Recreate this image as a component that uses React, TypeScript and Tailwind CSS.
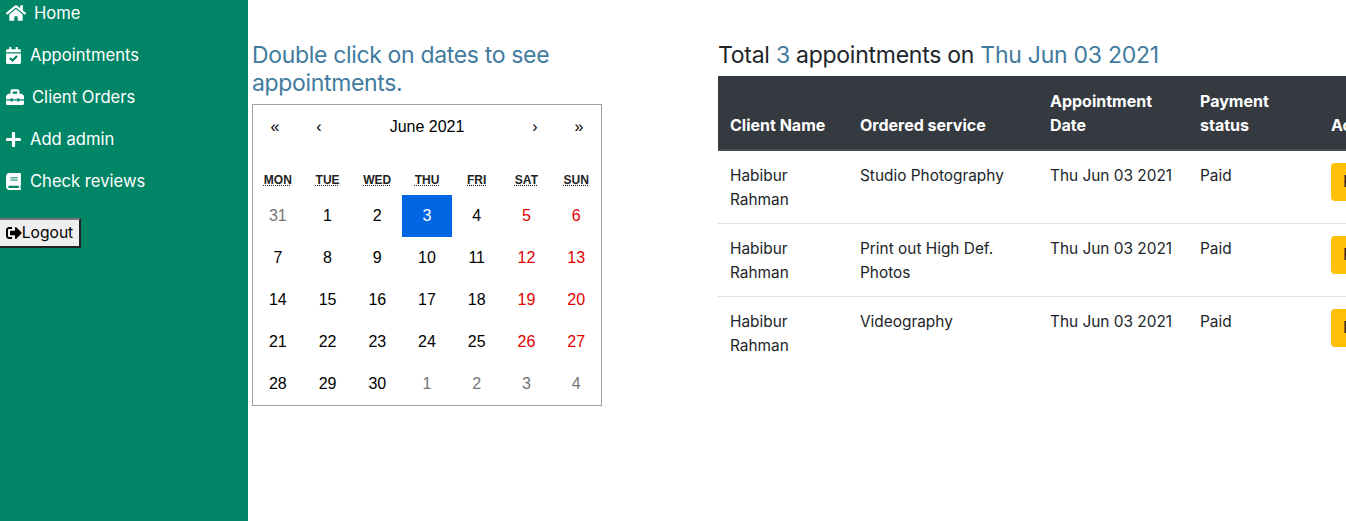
import { FaBook, FaCalendarCheck, FaHome, FaPlus, FaSignOutAlt, FaToolbox } from 'react-icons/fa';

const navItems = [
  { label: 'Home', Icon: FaHome, iconClass: 'h-[18px] w-[20px]', gap: 'gap-[8px]' },
  { label: 'Appointments', Icon: FaCalendarCheck, iconClass: 'h-[17px] w-[15px]', gap: 'gap-[9px]' },
  { label: 'Client Orders', Icon: FaToolbox, iconClass: 'h-[18px] w-[18px]', gap: 'gap-[8px]' },
  { label: 'Add admin', Icon: FaPlus, iconClass: 'h-[17px] w-[15px]', gap: 'gap-[9px]' },
  { label: 'Check reviews', Icon: FaBook, iconClass: 'h-[17px] w-[15px]', gap: 'gap-[9px]' },
];

const weekdays = ['MON', 'TUE', 'WED', 'THU', 'FRI', 'SAT', 'SUN'];

const days = [
  31, 1, 2, 3, 4, 5, 6,
  7, 8, 9, 10, 11, 12, 13,
  14, 15, 16, 17, 18, 19, 20,
  21, 22, 23, 24, 25, 26, 27,
  28, 29, 30, 1, 2, 3, 4,
];

const rows = [
  { service: 'Studio Photography' },
  { service: 'Print out High Def. Photos' },
  { service: 'Videography' },
];

function Sidebar() {
  return (
    <aside className="w-[248px] shrink-0 bg-[#008566] text-white">
      <ul className="-mt-px flex flex-col gap-[14px] pl-[6px]">
        {navItems.map(({ label, Icon, iconClass, gap }) => (
          <li key={label} className={`flex h-[28px] items-center ${gap} text-[16.6px]`}>
            <Icon className={iconClass} />
            {label}
          </li>
        ))}
      </ul>
      <button
        type="button"
        className="-ml-[2px] mt-[23px] flex h-[30px] w-[83px] items-center justify-center border-2 border-t-[#767676] border-l-[#767676] border-r-[#222] border-b-[#222] bg-[#efefef] text-[15.6px] text-black"
      >
        <FaSignOutAlt size={16} />
        Logout
      </button>
    </aside>
  );
}

function Calendar() {
  return (
    <div className="w-[350px] border border-[#a0a096] font-['Liberation_Sans',Arial,sans-serif] text-black">
      <div className="mb-[16px] flex h-[44px] items-center text-[16px]">
        <span className="w-[44px] text-center">«</span>
        <span className="w-[44px] text-center">‹</span>
        <span className="flex-1 text-center">June 2021</span>
        <span className="w-[44px] text-center">›</span>
        <span className="w-[44px] text-center">»</span>
      </div>
      <div className="grid grid-cols-7 text-center">
        {weekdays.map((d) => (
          <div key={d} className="h-[30px] pt-[8px] text-[12px] font-bold leading-[14px] text-[#222]">
            <abbr className="underline decoration-dotted">{d}</abbr>
          </div>
        ))}
        {days.map((d, i) => {
          const outside = i === 0 || i > 30;
          const weekend = i % 7 >= 5;
          const active = i === 3;
          let color = 'text-black';
          if (weekend) color = 'text-[#e00000]';
          if (outside) color = 'text-[#757575]';
          if (active) color = 'bg-[#0066e4] text-white';
          return (
            <div key={i} className={`flex h-[42px] items-center justify-center text-[16px] ${color}`}>
              {d}
            </div>
          );
        })}
      </div>
    </div>
  );
}

function AppointmentTable() {
  return (
    <table className="w-[640px] table-fixed border-collapse text-[16px] leading-[24px] text-[#212529]">
      <colgroup>
        <col className="w-[130px]" />
        <col className="w-[190px]" />
        <col className="w-[150px]" />
        <col className="w-[131px]" />
        <col />
      </colgroup>
      <thead className="bg-[#343a40] text-white">
        <tr className="border-b-2 border-[#454d55]">
          <th className="px-[12px] pb-[12px] pt-[13px] text-left align-bottom font-bold">Client Name</th>
          <th className="px-[12px] pb-[12px] pt-[13px] text-left align-bottom font-bold">Ordered service</th>
          <th className="px-[12px] pb-[12px] pt-[13px] text-left align-bottom font-bold">Appointment Date</th>
          <th className="px-[12px] pb-[12px] pt-[13px] text-left align-bottom font-bold">Payment status</th>
          <th className="px-[12px] pb-[12px] pt-[13px] text-left align-bottom font-bold whitespace-nowrap">Action</th>
        </tr>
      </thead>
      <tbody className="text-[15.4px]">
        {rows.map((r) => (
          <tr key={r.service} className="border-b border-[#dee2e6] last:border-b-0">
            <td className="px-[12px] pb-[11px] pt-[13px] align-top">Habibur Rahman</td>
            <td className="px-[12px] pb-[11px] pt-[13px] align-top">{r.service}</td>
            <td className="px-[12px] pb-[11px] pt-[13px] align-top">Thu Jun 03 2021</td>
            <td className="px-[12px] pb-[11px] pt-[13px] align-top">Paid</td>
            <td className="p-[12px] align-top">
              <button type="button" className="h-[38px] w-[70px] rounded-[4px] bg-[#ffc107] px-[12px] text-left text-[#212529]">
                Pending
              </button>
            </td>
          </tr>
        ))}
      </tbody>
    </table>
  );
}

export default function App() {
  return (
    <div className="flex h-[521px] w-[1346px] overflow-hidden bg-white font-['Inter',sans-serif]">
      <Sidebar />
      <main className="flex min-w-0 flex-1 pt-[41px]">
        <section className="ml-[4px] w-[350px]">
          <h4 className="mb-[7px] text-[23px] font-normal leading-[28px] tracking-[-0.34px] text-[#417ba0]">
            Double click on dates to see appointments.
          </h4>
          <Calendar />
        </section>
        <section className="ml-[116px]">
          <h4 className="mb-[7px] whitespace-nowrap text-[23px] font-normal leading-[28px] tracking-[-0.26px] text-[#212529]">
            Total <span className="text-[#417ba0]">3</span> appointments on{' '}
            <span className="text-[#417ba0]">Thu Jun 03 2021</span>
          </h4>
          <AppointmentTable />
        </section>
      </main>
    </div>
  );
}
